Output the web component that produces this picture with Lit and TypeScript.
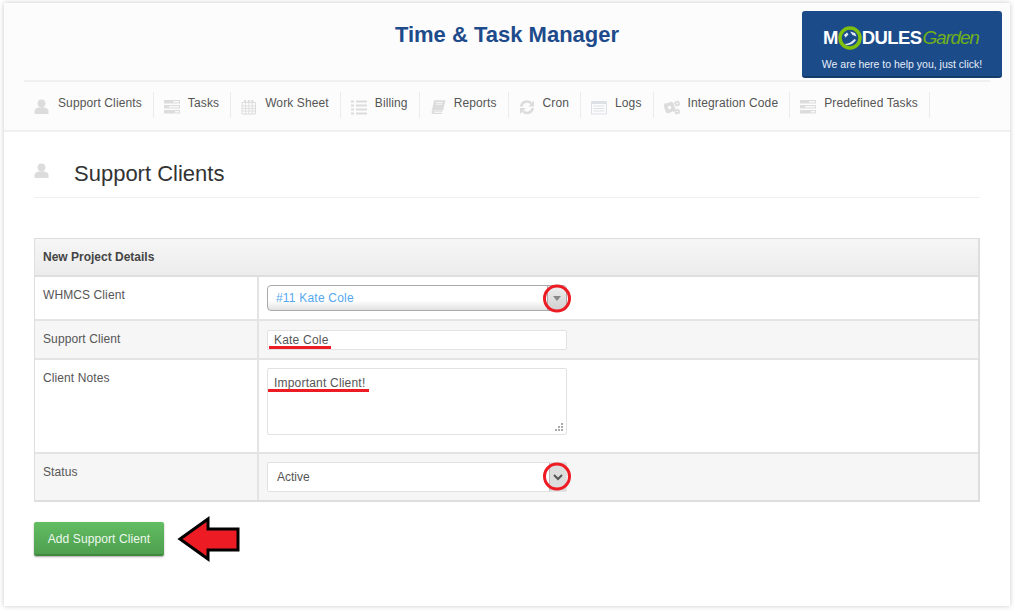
import { LitElement, html, css, svg } from "lit";
import { customElement } from "lit/decorators.js";

const person = svg`<circle cx="7.500" cy="4.300" r="3.900"/><path d="M.5 15v-3.200C.5 9.800 3.500 8.800 5.500 8.200h4c2 .6 5 1.600 5 3.600V15z"/>`;
const tasks = svg`<rect x="0" y="1" width="16" height="3.500"/><rect x="0" y="6" width="16" height="3.500"/><rect x="0" y="11" width="16" height="3.500"/><rect x="9" y="2.200" width="6" height="1.200" fill="#fff"/><rect x="5" y="7.200" width="10" height="1.200" fill="#fff"/><rect x="11" y="12.200" width="4" height="1.200" fill="#fff"/>`;
const cal = svg`<path d="M1 3.500h13.500V15H1z" fill="none" stroke="currentColor"/><path d="M1 7h13.500M1 9.500h13.500M1 12h13.500M4.500 3.500V15M7.800 3.500V15M11.200 3.500V15" fill="none" stroke="currentColor" stroke-width=".9"/><path d="M3 1h2v3H3zM6.800 1h2v3h-2zM10.300 1h2v3h-2z"/>`;
const list = svg`<path d="M0 1.500h3v2H0zM5 1.500h11v2H5zM0 5.500h3v2H0zM5 5.500h11v2H5zM0 9.500h3v2H0zM5 9.500h11v2H5zM0 13.500h3v2H0zM5 13.500h11v2H5z"/>`;
const book = svg`<path d="M4 1.200h10.500c.7 0 1 .4.800 1L13 11.500H2.800C2 11.500 1.700 12 1.600 12.600L4 1.800z"/><path d="M1.600 12.800c0-.6.500-1 1.200-1h10l-.3 1H4v1h8.300l-.3 1.200H3c-1 0-1.500-.9-1.400-2.200z"/><path d="M6 3.500h6.500M5.700 5.200h6.500" stroke="#fff" stroke-width=".7" fill="none"/>`;
const cron = svg`<path d="M2.200 7.500a5.800 5.800 0 0 1 9.900-3.200" fill="none" stroke="currentColor" stroke-width="2.600"/><path d="M15 1.500v6H9.200z"/><path d="M13.800 9a5.800 5.800 0 0 1-9.900 3.200" fill="none" stroke="currentColor" stroke-width="2.600"/><path d="M1 15V9h5.800z"/>`;
const logs = svg`<path d="M.5 2.500h15v12.500H.5z" fill="none" stroke="#dde1e6"/><path d="M.5 2.500h15v2.500H.5z" fill="#dde1e6"/><path d="M2.500 7h11M2.500 9.500h11M2.500 12h11" fill="none" stroke="#dde1e6"/>`;
const gear = (cx: number, cy: number, r: number) => svg`<circle cx=${cx} cy=${cy} r=${r * 0.62} fill="none" stroke="currentColor" stroke-width=${r * 0.62}/><circle cx=${cx} cy=${cy} r=${r * 0.95} fill="none" stroke="currentColor" stroke-width=${r * 0.3} stroke-dasharray=${`${r * 0.75} ${r * 0.74}`}/>`;
const gears = svg`${gear(5.500, 8.500, 5.500)}${gear(13.200, 4.500, 2.800)}${gear(13.200, 12.500, 2.800)}`;

const NAV = [
  ["Support Clients", person],
  ["Tasks", tasks],
  ["Work Sheet", cal],
  ["Billing", list],
  ["Reports", book],
  ["Cron", cron],
  ["Logs", logs],
  ["Integration Code", gears],
  ["Predefined Tasks", tasks],
];

@customElement("app-root")
export class AppRoot extends LitElement {
  static styles = css`
    :host { display: block; position: relative; height: 611px; box-sizing: border-box; padding: 3px 5px 5px 4px; font-family: "Liberation Sans", Arial, sans-serif; color: #4a4a4a; background: #fff; overflow: hidden; }
    .panel { height: 603px; background: #fff; box-shadow: 0 0 5px rgba(0,0,0,.22); display: flex; flex-direction: column; }
    .top { background: #fcfcfc; height: 127px; border-bottom: 2px solid #f0f0f0; padding: 0 20px 0 20px; flex: none; }
    .brand { height: 77px; border-bottom: 2px solid #f0f0f0; position: relative; }
    .brand h1 { margin: 0; padding-top: 18px; font-size: 22px; line-height: 28px; font-weight: bold; color: #1d4b8b; text-align: center; }
    .logo { position: absolute; right: -12px; top: 8px; width: 200px; height: 67px; box-sizing: border-box; background: #1c4b8a; border-bottom: 2px solid #153a6c; border-radius: 3px; color: #fff; display: flex; flex-direction: column; align-items: center; }
    .mark { display: flex; align-items: center; height: 26px; margin-top: 14px; font-size: 18.500px; line-height: 26px; font-weight: bold; letter-spacing: -.6px; width: 158px; }
    .mark svg { width: 26px; height: 26px; margin: 0 -1px 0 -1px; flex: none; }
    .garden { color: #6fb01a; font-weight: normal; font-style: italic; letter-spacing: -1.200px; font-size: 19px; margin-left: 1px; }
    .tag { font-size: 10.500px; line-height: 13px; margin-top: 7px; color: #e6eef8; }
    nav { display: flex; padding-top: 10px; }
    .item { display: flex; height: 26px; box-sizing: border-box; padding: 0 11px 0 10px; border-right: 1px solid #ececec; font-size: 12px; line-height: 22px; letter-spacing: .12px; color: #555; white-space: nowrap; }
    .item svg { width: 16px; height: 16px; margin: 7px 8px 0 0; color: #dcdcdc; fill: #dcdcdc; flex: none; }
    main { padding: 0 30px 0 30px; flex: 1; }
    .title { display: flex; align-items: flex-end; height: 66px; padding-bottom: 11px; border-bottom: 1px solid #f0f0f0; font-size: 22px; line-height: 25px; color: #333; box-sizing: border-box; margin-bottom: 40px; }
    .title svg { width: 15px; height: 15px; fill: #dcdcdc; margin: 0 25px 8px 0; flex: none; }
    .table { border: 1px solid #dedede; border-bottom-width: 2px; border-right-width: 2px; display: grid; grid-template-columns: 224px 1fr; font-size: 12px; }
    .head { grid-column: 1 / -1; height: 38px; line-height: 36px; padding-left: 8px; font-weight: bold; color: #444; background: linear-gradient(#f6f6f6, #ececec); border-bottom: 2px solid #dedede; box-sizing: border-box; }
    .label { padding: 11px 8px 0; border-right: 2px solid #e4e4e4; border-bottom: 2px solid #e4e4e4; line-height: 14px; letter-spacing: .1px; color: #555; }
    .field { padding: 0 0 0 8px; border-bottom: 2px solid #e4e4e4; display: flex; align-items: flex-start; }
    .alt { background: #f6f6f6; }
    .last { border-bottom: 0; }
    .r1 { height: 44px; box-sizing: border-box; }
    .r2 { height: 39px; box-sizing: border-box; }
    .r3 { height: 94px; box-sizing: border-box; }
    .r4 { height: 46px; box-sizing: border-box; }
    .sel1 { width: 300px; height: 26px; margin-top: 8px; box-sizing: border-box; border: 1px solid #aaa; border-radius: 4px; background: linear-gradient(#fff 60%, #e2e2e2); color: #55a8ef; padding-left: 8px; line-height: 24px; position: relative; letter-spacing: .2px; }
    .btn1 { position: absolute; right: 0; top: 0; bottom: 0; width: 18px; border-left: 1px solid #aaa; background: linear-gradient(#eee, #d0d0d0); border-radius: 0 3px 3px 0; display: flex; align-items: center; justify-content: center; }
    .tri { width: 0; height: 0; border: 4px solid transparent; border-top: 5px solid #888; border-bottom: 0; }
    .input { width: 300px; height: 20px; margin-top: 9px; box-sizing: border-box; background: #fff; border: 1px solid #e2e2e2; border-radius: 2px; padding-left: 6px; line-height: 19px; letter-spacing: .2px; color: #555; }
    .area { width: 300px; height: 67px; margin-top: 8px; box-sizing: border-box; background: #fff; border: 1px solid #e2e2e2; border-radius: 2px; padding: 4px 6px; line-height: 20px; letter-spacing: .2px; color: #555; position: relative; }
    .grip { position: absolute; right: 3px; bottom: 3px; width: 8px; height: 8px; }
    .sel2 { width: 300px; height: 30px; margin-top: 8px; box-sizing: border-box; background: #fff; border: 1px solid #e2e2e2; border-radius: 2px; padding-left: 9px; line-height: 28px; position: relative; color: #555; }
    .btn2 { position: absolute; right: 0; top: 0; bottom: 0; width: 16px; border-left: 1px solid #bbb; background: #ddd; display: flex; align-items: center; justify-content: center; }
    .btn2 svg { width: 10px; height: 7px; }
    .add { display: block; margin-top: 20px; width: 130px; height: 34px; box-sizing: border-box; padding: 2px 0 0; border: 0; border-bottom: 2px solid #3f8a3f; border-radius: 2px; background: linear-gradient(#62bd62, #4f9f4f); box-shadow: 0 1px 2px rgba(0,0,0,.35); color: #eef8ee; font: 12px/16px "Liberation Sans", Arial, sans-serif; letter-spacing: .1px; text-align: center; }
    .marks { position: absolute; left: 0; top: 0; width: 1015px; height: 611px; pointer-events: none; }
  `;

  render() {
    return html`
      <div class="panel">
        <div class="top">
          <div class="brand">
            <h1>Time &amp; Task Manager</h1>
            <div class="logo">
              <div class="mark">M<svg viewBox="0 0 26 26"><circle cx="13" cy="13" r="10" fill="#1c4b8a" stroke="#7fbf0e" stroke-width="3.500"/><path d="M7 10l3-2.500 1.500 2-3 3zM13 6.500l5 1.500 1.500 3.500-4-1.500zM8 19c4 0 7-2.500 9.500-5l1.500 1c-2 3.500-6 5.500-10 5z" fill="#e2ebf4"/></svg>DULES<span class="garden">Garden</span></div>
              <div class="tag">We are here to help you, just click!</div>
            </div>
          </div>
          <nav>
            ${NAV.map(([label, icon]) => html`<div class="item"><svg viewBox="0 0 16 16">${icon}</svg><span>${label}</span></div>`)}
          </nav>
        </div>
        <main>
          <div class="title"><svg viewBox="0 0 15 15">${person}</svg><span>Support Clients</span></div>
          <div class="table">
            <div class="head">New Project Details</div>
            <div class="label r1">WHMCS Client</div>
            <div class="field r1"><div class="sel1">#11 Kate Cole<span class="btn1"><span class="tri"></span></span></div></div>
            <div class="label alt r2">Support Client</div>
            <div class="field alt r2"><div class="input">Kate Cole</div></div>
            <div class="label r3">Client Notes</div>
            <div class="field r3"><div class="area">Important Client!<svg class="grip" viewBox="0 0 8 8" fill="#aaa"><path d="M6 0h2v2H6zM3 3h2v2H3zM6 3h2v2H6zM0 6h2v2H0zM3 6h2v2H3zM6 6h2v2H6z"/></svg></div></div>
            <div class="label alt r4 last">Status</div>
            <div class="field alt r4 last"><div class="sel2">Active<span class="btn2"><svg viewBox="0 0 10 7"><path d="M1 1l4 4 4-4" fill="none" stroke="#555" stroke-width="2"/></svg></span></div></div>
          </div>
          <button class="add">Add Support Client</button>
        </main>
      </div>
      <svg class="marks" viewBox="0 0 1015 611">
        <circle cx="557" cy="298.500" r="12.500" fill="none" stroke="#ed1c24" stroke-width="3"/>
        <circle cx="557" cy="476.500" r="12.500" fill="none" stroke="#ed1c24" stroke-width="3"/>
        <rect x="269" y="346" width="62" height="3" fill="#ed1c24"/>
        <rect x="268" y="389" width="101" height="3" fill="#ed1c24"/>
        <polygon points="180,539 208,519 208,529 238,529 238,550 208,550 208,559" fill="#ed1c24" stroke="#000" stroke-width="3"/>
      </svg>
    `;
  }
}
